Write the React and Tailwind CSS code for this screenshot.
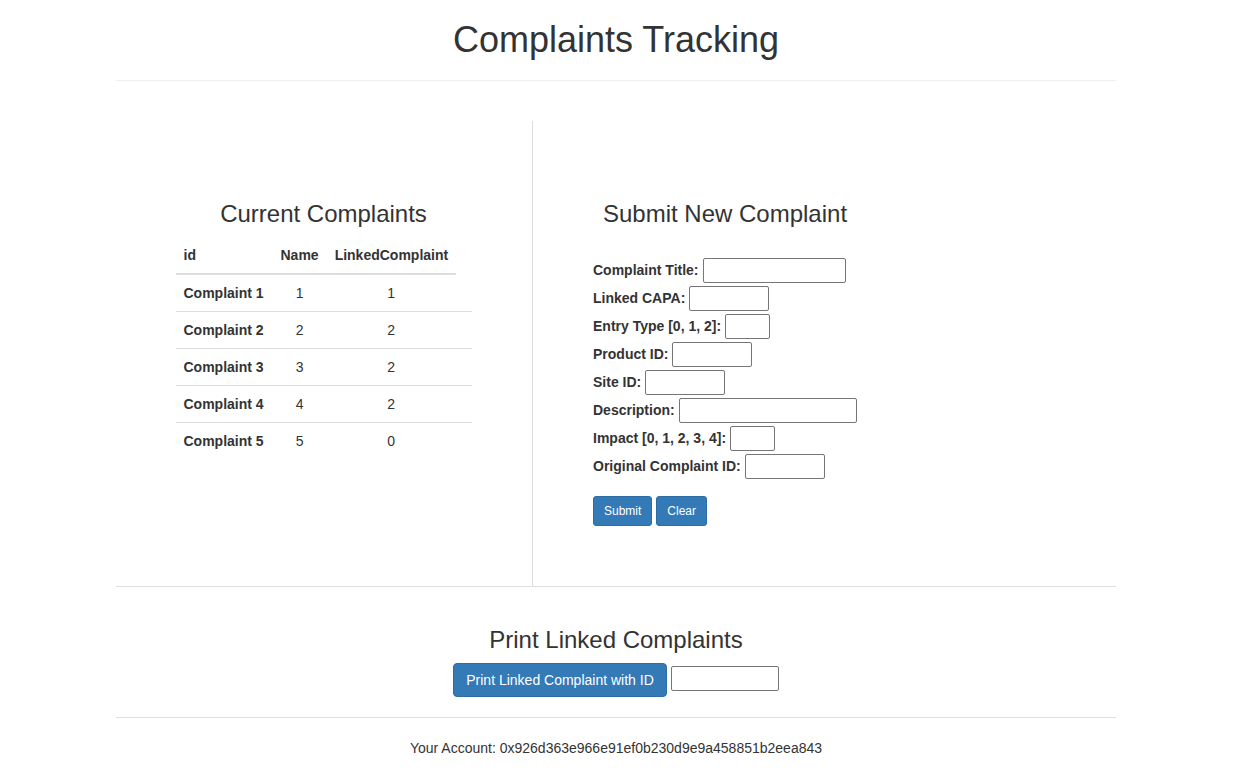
import React from 'react';

const complaints = [
  { id: 'Complaint 1', name: 1, linked: 1 },
  { id: 'Complaint 2', name: 2, linked: 2 },
  { id: 'Complaint 3', name: 3, linked: 2 },
  { id: 'Complaint 4', name: 4, linked: 2 },
  { id: 'Complaint 5', name: 5, linked: 0 }
];

const fields = [
  { label: 'Complaint Title:', width: 'w-[143px]' },
  { label: 'Linked CAPA:', width: 'w-[80px]' },
  { label: 'Entry Type [0, 1, 2]:', width: 'w-[45px]' },
  { label: 'Product ID:', width: 'w-[80px]' },
  { label: 'Site ID:', width: 'w-[80px]' },
  { label: 'Description:', width: 'w-[178px]' },
  { label: 'Impact [0, 1, 2, 3, 4]:', width: 'w-[45px]' },
  { label: 'Original Complaint ID:', width: 'w-[80px]' }
];

const inputClass = 'h-[25px] border border-[#767676] rounded-[2px] bg-white outline-none';

const App = () => {
  return (
    <div className="min-h-screen bg-white text-[#333] text-[14px] leading-[20px] pr-[14px] font-['Liberation_Sans',Arial,sans-serif]">
      <div className="mx-auto w-[1000px]">
        {/* Header */}
        <div className="pt-[20px] pb-[20px] border-b border-[#eee] text-center">
          <h1 className="text-[36px] leading-[40px] font-normal">Complaints Tracking</h1>
        </div>

        {/* Main */}
        <div className="mt-[40px] flex border-b border-[#ddd]">
          {/* Current complaints */}
          <div className="w-[417px] h-[465px] border-r border-[#ddd] pt-[80px] pr-px flex flex-col items-center">
            <h3 className="text-[24px] leading-[26px] font-normal mb-[10px]">Current Complaints</h3>
            <table className="w-[296px] border-collapse">
              <thead>
                <tr>
                  <th className="w-[97px] text-left font-bold p-[8px] border-b-2 border-[#ddd]">id</th>
                  <th className="w-[54px] text-left font-bold p-[8px] border-b-2 border-[#ddd]">Name</th>
                  <th className="w-[129px] text-left font-bold py-[8px] pl-[8px] pr-0 border-b-2 border-[#ddd] whitespace-nowrap">LinkedComplaint</th>
                  <th className="w-[16px] p-0"></th>
                </tr>
              </thead>
              <tbody>
                {complaints.map((c, i) => (
                  <tr key={c.id} className={i === 0 ? '' : 'border-t border-[#ddd]'}>
                    <td className="p-[8px] font-bold whitespace-nowrap">{c.id}</td>
                    <td className="p-[8px] text-center">{c.name}</td>
                    <td className="p-[8px] text-center">{c.linked}</td>
                    <td className="p-0"></td>
                  </tr>
                ))}
              </tbody>
            </table>
          </div>

          {/* Submit new complaint */}
          <div className="flex-1 pt-[80px] pl-[60px]">
            <div className="w-[264px]">
              <h3 className="text-[24px] leading-[26px] font-normal text-center whitespace-nowrap">Submit New Complaint</h3>
              <div className="mt-[29px]">
                {fields.map((f) => (
                  <div key={f.label} className="h-[28px] flex items-center whitespace-nowrap">
                    <label className="font-bold mr-[4px]">{f.label}</label>
                    <input className={`${inputClass} ${f.width}`} />
                  </div>
                ))}
              </div>
              <div className="mt-[16px] flex gap-[4px]">
                <button className="h-[30px] px-[10px] text-[12px] text-white bg-[#337ab7] border border-[#2e6da4] rounded-[3px]">Submit</button>
                <button className="h-[30px] px-[10px] text-[12px] text-white bg-[#337ab7] border border-[#2e6da4] rounded-[3px]">Clear</button>
              </div>
            </div>
          </div>
        </div>

        {/* Print linked */}
        <div className="pt-[40px] pb-[20px] border-b border-[#ddd] flex flex-col items-center">
          <h3 className="text-[24px] leading-[26px] font-normal mb-[10px]">Print Linked Complaints</h3>
          <div className="flex items-start gap-[4px]">
            <button className="h-[34px] px-[12px] text-[14px] text-white bg-[#337ab7] border border-[#2e6da4] rounded-[4px]">Print Linked Complaint with ID</button>
            <input className={`${inputClass} w-[108px] mt-[3px]`} />
          </div>
        </div>

        {/* Footer */}
        <p className="pt-[20px] text-center">Your Account: 0x926d363e966e91ef0b230d9e9a458851b2eea843</p>
      </div>
    </div>
  );
};

export default App;
